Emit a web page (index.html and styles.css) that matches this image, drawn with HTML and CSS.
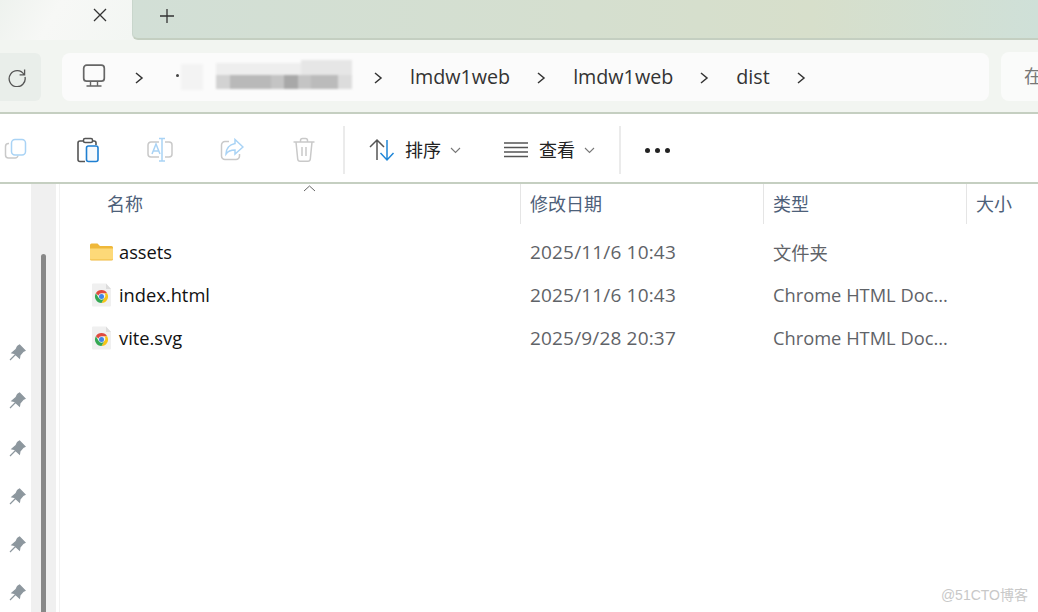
FILE: index.html
```html
<!DOCTYPE html>
<html lang="zh-CN">
<head>
<meta charset="utf-8">
<title>dist - 文件资源管理器</title>
<link rel="stylesheet" href="styles.css">
</head>
<body>
<div class="window">
  <header class="tabstrip">
    <div class="tab">
      <svg class="ic-close" width="14" height="14" viewBox="0 0 14 14"><path d="M1 1l12 12M13 1L1 13" stroke="#333" stroke-width="1.3" fill="none"/></svg>
    </div>
    <div class="tab-rest">
      <svg class="ic-plus" width="16" height="16" viewBox="0 0 16 16"><path d="M8 1v14M1 8h14" stroke="#333" stroke-width="1.3" fill="none"/></svg>
    </div>
  </header>

  <nav class="navbar">
    <button class="refresh" aria-label="刷新">
      <svg width="20" height="20" viewBox="0 0 20 20"><path d="M17 7.5A8 8 0 1 0 18 10M17.6 2.6V7.8H12.6" stroke="#555" stroke-width="1.3" fill="none"/></svg>
    </button>
    <div class="address">
      <svg class="ic-pc" width="24" height="24" viewBox="0 0 24 24"><rect x="1.7" y="1.2" width="20.6" height="16" rx="3" stroke="#666" stroke-width="1.7" fill="none"/><path d="M8.5 17.5v4M15.5 17.5v4M4.5 22h15" stroke="#666" stroke-width="1.4" fill="none"/></svg>
      <svg class="chev chev-1" width="10" height="14" viewBox="0 0 10 14"><path d="M2 2l6 5-6 5" stroke="#333" stroke-width="1.5" fill="none"/></svg>
      <span class="dot"></span>
      <svg class="mosaic" width="172" height="34" viewBox="0 0 172 34">
        <rect x="0" y="4" width="22" height="26" fill="#f3f3f3"/>
        <rect x="35" y="3" width="85" height="12" fill="#eeeeee"/>
        <rect x="120" y="0" width="51" height="15" fill="#e6e6e6"/>
        <rect x="35" y="15" width="14" height="14" fill="#d2d2d2"/>
        <rect x="49" y="15" width="41" height="14" fill="#b9b9b9"/>
        <rect x="90" y="15" width="13" height="14" fill="#c4c4c4"/>
        <rect x="103" y="15" width="14" height="14" fill="#a8a8a8"/>
        <rect x="117" y="15" width="13" height="14" fill="#c4c4c4"/>
        <rect x="130" y="15" width="27" height="14" fill="#bbbbbb"/>
        <rect x="157" y="15" width="14" height="14" fill="#dcdcdc"/>
      </svg>
      <svg class="chev chev-2" width="10" height="14" viewBox="0 0 10 14"><path d="M2 2l6 5-6 5" stroke="#333" stroke-width="1.5" fill="none"/></svg>
      <span class="crumb">lmdw1web</span>
      <svg class="chev" width="10" height="14" viewBox="0 0 10 14"><path d="M2 2l6 5-6 5" stroke="#333" stroke-width="1.5" fill="none"/></svg>
      <span class="crumb">lmdw1web</span>
      <svg class="chev" width="10" height="14" viewBox="0 0 10 14"><path d="M2 2l6 5-6 5" stroke="#333" stroke-width="1.5" fill="none"/></svg>
      <span class="crumb">dist</span>
      <svg class="chev" width="10" height="14" viewBox="0 0 10 14"><path d="M2 2l6 5-6 5" stroke="#333" stroke-width="1.5" fill="none"/></svg>
    </div>
    <div class="search">在</div>
  </nav>

  <section class="toolbar">
    <svg class="tool tool-copy" width="24" height="24" viewBox="0 0 24 24"><path d="M5 5.5H4.500A3 3 0 0 0 1.500 8.500V17a3 3 0 0 0 3 3H11a3 3 0 0 0 3-2.500" stroke="#c9c9c9" stroke-width="1.5" fill="none"/><rect x="7.500" y="1.500" width="14" height="15.500" rx="3.500" stroke="#a9d3f5" stroke-width="1.5" fill="none"/></svg>
    <svg class="tool tool-paste" width="24" height="26" viewBox="0 0 24 26"><path d="M8 4H4a2 2 0 0 0-2 2v16.500a2 2 0 0 0 2 2h5M16 4h2a2 2 0 0 1 2 2v2" stroke="#555" stroke-width="1.6" fill="none"/><rect x="7.500" y="1.500" width="9" height="4" rx="1.500" stroke="#555" stroke-width="1.500" fill="none"/><rect x="10.500" y="9" width="11.500" height="15.500" rx="2" stroke="#1f7fd1" stroke-width="1.600" fill="#f7fafd"/></svg>
    <svg class="tool tool-rename" width="26" height="26" viewBox="0 0 26 26"><path d="M12 5H4a3 3 0 0 0-3 3v9a3 3 0 0 0 3 3h8M18 5h4a3 3 0 0 1 3 3v9a3 3 0 0 1-3 3h-4" stroke="#c9c9c9" stroke-width="1.500" fill="none"/><path d="M12 1.500h6M15 1.500v22.500M12 24h6M5 17l4-10 4 10M6.500 14h5" stroke="#a9d3f5" stroke-width="1.500" fill="none"/></svg>
    <svg class="tool tool-share" width="24" height="24" viewBox="0 0 24 24"><path d="M9 3.500H5a3.500 3.500 0 0 0-3.500 3.500v11A3.500 3.500 0 0 0 5 21.500h11a3.500 3.500 0 0 0 3.500-3.500v-2" stroke="#c9c9c9" stroke-width="1.500" fill="none"/><path d="M15 1.500l8 7.500-8 7v-4c-4 0-7 1-9 4 0-5 3-9.500 9-10.500z" stroke="#a9d3f5" stroke-width="1.500" fill="none"/></svg>
    <svg class="tool tool-trash" width="24" height="26" viewBox="0 0 24 26"><path d="M1.500 5h21M8.500 5V3.500a2 2 0 0 1 2-2h3a2 2 0 0 1 2 2V5M4 5l1.700 17a2.500 2.500 0 0 0 2.500 2.300h7.600a2.500 2.500 0 0 0 2.500-2.300L20 5M10 10v9M14 10v9" stroke="#c9c9c9" stroke-width="1.500" fill="none"/></svg>
    <span class="sep sep-1"></span>
    <svg class="tool-sort" width="26" height="24" viewBox="0 0 26 24"><path d="M8 22V2M1 9l7-7 7 7" stroke="#555" stroke-width="1.500" fill="none"/><path d="M18 2v20M11.500 15l6.500 7 6.500-7" stroke="#1f86d8" stroke-width="1.500" fill="none"/></svg>
    <span class="tool-label label-sort">排序</span>
    <svg class="caret" width="11" height="7" viewBox="0 0 11 7"><path d="M1 1l4.500 4.500L10 1" stroke="#777" stroke-width="1.100" fill="none"/></svg>
    <svg class="tool-view" width="24" height="18" viewBox="0 0 24 18"><path d="M0 2h24M0 6.500h24M0 11h24M0 15.500h24" stroke="#555" stroke-width="1.400" fill="none"/></svg>
    <span class="tool-label">查看</span>
    <svg class="caret" width="11" height="7" viewBox="0 0 11 7"><path d="M1 1l4.500 4.500L10 1" stroke="#777" stroke-width="1.100" fill="none"/></svg>
    <span class="sep sep-2"></span>
    <span class="more"><i></i><i></i><i></i></span>
  </section>

  <main class="body">
    <aside class="sidebar">
      <div class="quick">
        <hr class="quick-rule">
        <svg class="pin" width="17" height="17" viewBox="0 0 17 17"><path d="M10.500 1l5.500 5.500-2 1-3 3.500-.5 3L5.500 9.500 3 9l4-3.500 1.500-3zM6.500 10.500L1 16" fill="#8d979e" stroke="#8d979e" stroke-width="1.200"/></svg>
        <svg class="pin" width="17" height="17" viewBox="0 0 17 17"><path d="M10.500 1l5.500 5.500-2 1-3 3.500-.5 3L5.500 9.500 3 9l4-3.500 1.500-3zM6.500 10.500L1 16" fill="#8d979e" stroke="#8d979e" stroke-width="1.200"/></svg>
        <svg class="pin" width="17" height="17" viewBox="0 0 17 17"><path d="M10.500 1l5.500 5.500-2 1-3 3.500-.5 3L5.500 9.500 3 9l4-3.500 1.500-3zM6.500 10.500L1 16" fill="#8d979e" stroke="#8d979e" stroke-width="1.200"/></svg>
        <svg class="pin" width="17" height="17" viewBox="0 0 17 17"><path d="M10.500 1l5.500 5.500-2 1-3 3.500-.5 3L5.500 9.500 3 9l4-3.500 1.500-3zM6.500 10.500L1 16" fill="#8d979e" stroke="#8d979e" stroke-width="1.200"/></svg>
        <svg class="pin" width="17" height="17" viewBox="0 0 17 17"><path d="M10.500 1l5.500 5.500-2 1-3 3.500-.5 3L5.500 9.500 3 9l4-3.500 1.500-3zM6.500 10.500L1 16" fill="#8d979e" stroke="#8d979e" stroke-width="1.200"/></svg>
        <svg class="pin" width="17" height="17" viewBox="0 0 17 17"><path d="M10.500 1l5.500 5.500-2 1-3 3.500-.5 3L5.500 9.500 3 9l4-3.500 1.500-3zM6.500 10.500L1 16" fill="#8d979e" stroke="#8d979e" stroke-width="1.200"/></svg>
      </div>
      <div class="track"><div class="thumb"></div></div>
    </aside>

    <div class="list">
      <div class="list-head">
        <div class="col col-name">名称
          <svg class="sort-up" width="13" height="7" viewBox="0 0 13 7"><path d="M1 6l5.500-5L12 6" stroke="#666" stroke-width="1" fill="none"/></svg>
        </div>
        <div class="col">修改日期</div>
        <div class="col">类型</div>
        <div class="col">大小</div>
      </div>

      <div class="row">
        <div class="cell-name">
          <svg class="ficon" width="23" height="18" viewBox="0 0 23 18"><path d="M0 2a1.500 1.500 0 0 1 1.500-1.500h6L10 3h11.500A1.500 1.500 0 0 1 23 4.500V16a1.500 1.500 0 0 1-1.500 1.500h-20A1.500 1.500 0 0 1 0 16z" fill="#efb83a"/><path d="M0 5.500h23V15.500a1 1 0 0 1-1 1H1a1 1 0 0 1-1-1z" fill="#fdd978"/></svg>
          <span>assets</span>
        </div>
        <div class="cell cell-date">2025/11/6 10:43</div>
        <div class="cell">文件夹</div>
        <div class="cell"></div>
      </div>

      <div class="row">
        <div class="cell-name">
          <svg class="ficon" width="23" height="24" viewBox="0 0 23 24"><path d="M2 1.500a1 1 0 0 1 1-1h13l5 5.500v16.500a1 1 0 0 1-1 1H3a1 1 0 0 1-1-1z" fill="#f0f0f0"/><path d="M16 .5v5.500h5z" fill="#dcdcdc"/><path d="M11.500 7a6.500 6.500 0 0 1 5.630 3.250H11.500a3.250 3.250 0 0 0-3.100 2.300L5.870 10.250A6.500 6.500 0 0 1 11.500 7z" fill="#e04a3f"/><path d="M17.130 10.250A6.500 6.500 0 0 1 11.500 20l2.800-4.900a3.250 3.250 0 0 0 0-4.850z" fill="#f5c518"/><path d="M5.870 10.250L8.700 15.100a3.250 3.250 0 0 0 5.600 0L11.500 20a6.500 6.500 0 0 1-5.630-9.750z" fill="#34a853"/><circle cx="11.500" cy="13.500" r="2.500" fill="#3f86e8"/></svg>
          <span>index.html</span>
        </div>
        <div class="cell cell-date">2025/11/6 10:43</div>
        <div class="cell">Chrome HTML Doc...</div>
        <div class="cell"></div>
      </div>

      <div class="row">
        <div class="cell-name">
          <svg class="ficon" width="23" height="24" viewBox="0 0 23 24"><path d="M2 1.500a1 1 0 0 1 1-1h13l5 5.500v16.500a1 1 0 0 1-1 1H3a1 1 0 0 1-1-1z" fill="#f0f0f0"/><path d="M16 .5v5.500h5z" fill="#dcdcdc"/><path d="M11.500 7a6.500 6.500 0 0 1 5.630 3.250H11.500a3.250 3.250 0 0 0-3.100 2.300L5.870 10.250A6.500 6.500 0 0 1 11.500 7z" fill="#e04a3f"/><path d="M17.130 10.250A6.500 6.500 0 0 1 11.500 20l2.800-4.900a3.250 3.250 0 0 0 0-4.850z" fill="#f5c518"/><path d="M5.870 10.250L8.700 15.100a3.250 3.250 0 0 0 5.600 0L11.500 20a6.500 6.500 0 0 1-5.630-9.750z" fill="#34a853"/><circle cx="11.500" cy="13.500" r="2.500" fill="#3f86e8"/></svg>
          <span>vite.svg</span>
        </div>
        <div class="cell cell-date">2025/9/28 20:37</div>
        <div class="cell">Chrome HTML Doc...</div>
        <div class="cell"></div>
      </div>
    </div>
  </main>

  <div class="watermark">@51CTO博客</div>
</div>
</body>
</html>
```

FILE: styles.css
```css
* { box-sizing: border-box; }
html, body { margin: 0; padding: 0; }
body {
  width: 1038px;
  height: 612px;
  overflow: hidden;
  background: #fff;
  font-family: "Open Sans", "Noto Sans CJK SC", sans-serif;
}
.window {
  position: relative;
  width: 1038px;
  height: 612px;
  display: flex;
  flex-direction: column;
}

/* tab strip */
.tabstrip {
  height: 40px;
  flex: none;
  display: flex;
  background: #f3f6f3;
}
.tab {
  width: 132px;
  padding: 8px 0 0 93px;
  background: linear-gradient(120deg, #eef2ee 0%, #f7f8f6 40%, #f3f6f3 100%);
}
.ic-close { display: block; }
.tab-rest {
  flex: 1;
  padding: 8px 0 0 26px;
  border-bottom: 2px solid #c4cfc1;
  border-left: 1px solid #c9d6cc;
  border-bottom-left-radius: 6px;
  background: linear-gradient(90deg, #d2dfd6 0%, #d5dfcf 50%, #d7dfcb 75%, #cfe0d8 100%);
}
.ic-plus { display: block; }

/* navigation row */
.navbar {
  height: 74px;
  flex: none;
  display: flex;
  align-items: flex-start;
  padding-top: 13px;
  background: #f2f5f1;
  border-bottom: 2px solid #c5cfc1;
}
.refresh {
  width: 41px;
  height: 48px;
  flex: none;
  margin-right: 21px;
  padding: 0 0 0 7px;
  border: 0;
  border-radius: 0 6px 6px 0;
  background: #e9eeea;
  display: flex;
  align-items: center;
}
.address {
  width: 927px;
  height: 48px;
  flex: none;
  display: flex;
  align-items: center;
  padding-left: 20px;
  border-radius: 8px;
  background: #fbfbfb;
}
.ic-pc { flex: none; margin-top: -2px; }
.chev { flex: none; margin: 1px 27px 0 26px; }
.chev-1 { margin: 1px 32px 0 28px; }
.chev-2 { margin: 1px 27px 0 20px; }
.dot {
  width: 3px;
  height: 3px;
  flex: none;
  border-radius: 50%;
  background: #444;
  margin-right: 2px;
  margin-top: -4px;
}
.mosaic { flex: none; filter: blur(1px); }
.crumb {
  font-size: 19.700px;
  color: #333;
  line-height: 48px;
}
.search {
  width: 60px;
  height: 49px;
  flex: none;
  margin: -1px 0 0 12px;
  padding-left: 23px;
  border-radius: 8px 0 0 8px;
  background: #fafbfa;
  color: #777;
  font-size: 18px;
  line-height: 49px;
}

/* command bar */
.toolbar {
  height: 70px;
  flex: none;
  display: flex;
  align-items: center;
  padding-top: 4px;
  background: #fff;
  border-bottom: 2px solid #c5cfc1;
}
.tool { flex: none; }
.tool-copy { margin-left: 4px; }
.tool-paste { margin-left: 48px; }
.tool-rename { margin-left: 47px; }
.tool-share { margin-left: 47px; }
.tool-trash { margin-left: 48px; }
.sep {
  width: 2px;
  height: 48px;
  flex: none;
  background: #ebebeb;
}
.sep-1 { margin-left: 27px; }
.sep-2 { margin-left: 24px; }
.tool-sort { flex: none; margin-left: 24px; }
.tool-view { flex: none; margin-left: 43px; }
.tool-label {
  margin: -2px 0 0 11px;
  font-size: 18px;
  color: #222;
}
.label-sort { margin-left: 10px; }
.caret { flex: none; margin-left: 9px; }
.more {
  display: flex;
  gap: 5px;
  margin-left: 24px;
}
.more i {
  width: 5px;
  height: 5px;
  border-radius: 50%;
  background: #222;
}

/* main */
.body {
  flex: 1;
  display: flex;
  min-height: 0;
}
.sidebar {
  width: 60px;
  flex: none;
  display: flex;
  border-right: 1px solid #f2f2f2;
}
.quick {
  width: 31px;
  flex: none;
  padding-top: 119px;
  display: flex;
  flex-direction: column;
}
.quick-rule {
  width: 19px;
  height: 2px;
  margin: 0 0 41px;
  border: 0;
  background: #d9d9d9;
}
.pin {
  display: block;
  flex: none;
  margin: 0 0 31px 9px;
}
.track {
  width: 25px;
  flex: none;
  padding: 70px 0 0 10px;
  background: #f0f0f0;
}
.thumb {
  width: 5px;
  height: 100%;
  border-radius: 3px 3px 0 0;
  background: #888;
}
.list { flex: 1; min-width: 0; }
.list-head, .row {
  display: grid;
  grid-template-columns: 460px 243px 203px 1fr;
}
.list-head { height: 46px; }
.col {
  position: relative;
  height: 40px;
  padding-left: 9px;
  border-left: 1px solid #e5e5e5;
  font-size: 18px;
  line-height: 40px;
  color: #4d6079;
}
.col-name {
  padding-left: 47px;
  border-left: 0;
}
.sort-up {
  position: absolute;
  left: 243px;
  top: 1px;
}
.row {
  height: 43px;
  align-items: center;
  font-size: 18.300px;
}
.cell-name {
  display: flex;
  align-items: center;
  gap: 6px;
  padding-left: 30px;
  color: #111;
}
.ficon { flex: none; }
.cell {
  padding-left: 10px;
  color: #5f6368;
  white-space: nowrap;
}
.cell-date {
  font-size: 19px;
  letter-spacing: .17px;
}
.watermark {
  position: absolute;
  right: 10px;
  bottom: 8px;
  font-family: "Liberation Sans", "Noto Sans CJK SC", sans-serif;
  font-size: 14px;
  color: #c8c8c8;
}
```
